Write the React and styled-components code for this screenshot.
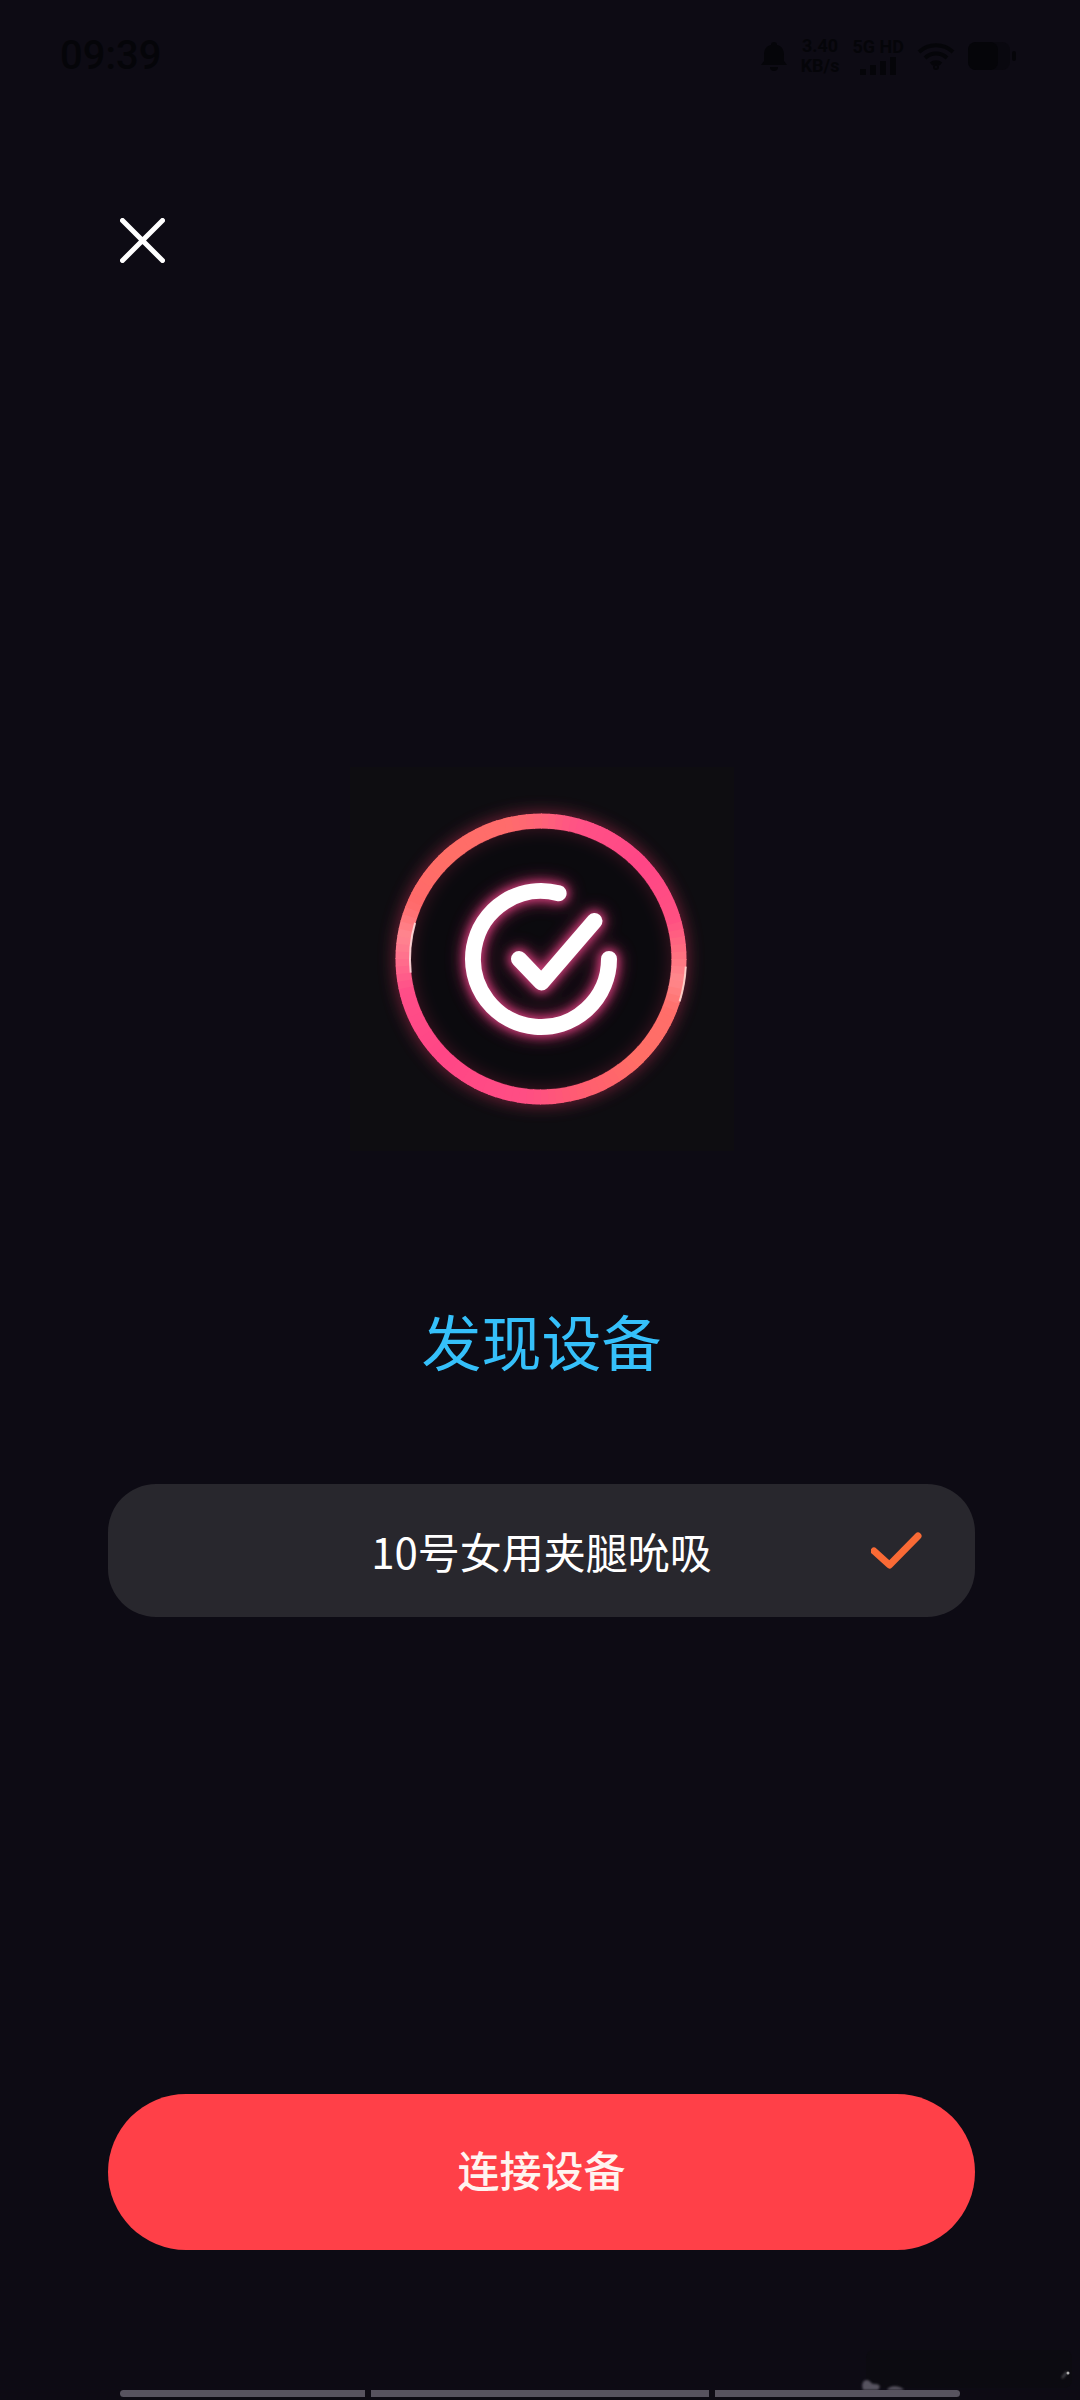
import styled, { createGlobalStyle } from "styled-components";

const GlobalStyle = createGlobalStyle`
  :root {
    --cl-bg: #0d0b14;
    --cl-status: #050509;
    --cl-picture: #0e0d11;
    --cl-card: #28272d;
    --cl-title: #35c0fa;
    --cl-accent: #ff4048;
    --cl-check: #f96a35;
    --cl-nav: #57535f;
  }

  * {
    box-sizing: border-box;
  }

  body {
    margin: 0;
    background: var(--cl-bg);
    font-family: "Noto Sans CJK SC", "Noto Sans", sans-serif;
  }
`;

const Page = styled.div`
  display: flex;
  flex-direction: column;
  width: 100%;
  min-height: 100vh;
  overflow: hidden;
  background: var(--cl-bg);
`;

const StatusBar = styled.header`
  display: flex;
  align-items: center;
  justify-content: space-between;
  height: 116px;
  padding: 0 64px 4px 60px;
  color: var(--cl-status);
`;

const Clock = styled.time`
  font-family: Roboto, sans-serif;
  font-size: 40px;
  font-weight: 500;
  line-height: 40px;
`;

const StatusIcons = styled.div`
  display: flex;
  align-items: center;
  gap: 13px;
`;

const StatusStack = styled.div`
  display: flex;
  flex-direction: column;
  align-items: center;
  font-family: Roboto, sans-serif;
  font-size: 18px;
  font-weight: 700;
  line-height: 20px;
`;

const TopBar = styled.div`
  display: flex;
  padding: 90px 108px 0;
`;

const CloseButton = styled.button`
  display: flex;
  padding: 12px;
  border: none;
  background: none;
  color: #ffffff;
  cursor: pointer;
`;

const Content = styled.main`
  display: flex;
  flex: 1;
  flex-direction: column;
  align-items: center;
  padding: 492px 105px 140px 108px;
`;

const Picture = styled.div`
  display: flex;
  background: var(--cl-picture);
`;

const Title = styled.h1`
  margin: 145px 0 100px;
  color: var(--cl-title);
  font-size: 60px;
  font-weight: 400;
  line-height: 88px;
`;

const DeviceList = styled.ul`
  width: 100%;
  margin: 0;
  padding: 0;
  list-style: none;
`;

const DeviceButton = styled.button`
  display: grid;
  grid-template-columns: 52px 1fr 52px;
  align-items: center;
  width: 100%;
  height: 133px;
  padding: 0 52px;
  border: none;
  border-radius: 48px;
  background: var(--cl-card);
  color: #ffffff;
  font-family: inherit;
  font-size: 42px;
  line-height: 60px;
  cursor: pointer;

  span {
    grid-column: 2;
  }
`;

const ConnectButton = styled.button`
  width: 100%;
  height: 156px;
  margin-top: auto;
  padding: 0 0 6px;
  border: none;
  border-radius: 78px;
  background: var(--cl-accent);
  color: #fff4f0;
  font-family: inherit;
  font-size: 42px;
  font-weight: 500;
  line-height: 60px;
  cursor: pointer;
`;

const NavBar = styled.footer`
  position: relative;
  display: flex;
  gap: 6px;
  padding: 0 120px 3px;
`;

const NavSegment = styled.i`
  flex: ${({ $grow }) => $grow};
  height: 7px;
  background: var(--cl-nav);

  &:first-child {
    border-radius: 4px 0 0 4px;
  }

  &:nth-child(3) {
    border-radius: 0 4px 4px 0;
  }
`;

const Smudge = styled.svg`
  position: absolute;
  right: 0;
  bottom: 0;
  pointer-events: none;
`;

// angle clockwise from the top, then r g b
const RING_STOPS = [
  [0, 255, 98, 122],
  [14, 255, 82, 134],
  [45, 255, 70, 134],
  [72, 255, 80, 130],
  [86, 255, 112, 128],
  [97, 255, 136, 140],
  [110, 255, 110, 106],
  [135, 255, 110, 102],
  [160, 255, 94, 112],
  [185, 255, 78, 132],
  [225, 255, 70, 134],
  [255, 255, 78, 136],
  [268, 255, 110, 140],
  [278, 255, 134, 144],
  [292, 255, 106, 106],
  [315, 255, 110, 102],
  [345, 255, 108, 108],
  [360, 255, 98, 122],
];

const CX = 191;
const CY = 192;

function ringColor(angle) {
  const next = RING_STOPS.findIndex((stop) => stop[0] > angle);
  const a = RING_STOPS[next - 1];
  const b = RING_STOPS[next];
  const t = (angle - a[0]) / (b[0] - a[0]);
  const rgb = [1, 2, 3].map((i) => Math.round(a[i] + (b[i] - a[i]) * t));
  return `rgb(${rgb.join(",")})`;
}

function arc(radius, from, to) {
  const point = (deg) => {
    const rad = ((deg - 90) * Math.PI) / 180;
    return `${CX + radius * Math.cos(rad)} ${CY + radius * Math.sin(rad)}`;
  };
  const large = to - from > 180 ? 1 : 0;
  return `M${point(from)}A${radius} ${radius} 0 ${large} 1 ${point(to)}`;
}

const SEGMENTS = Array.from({ length: 120 }, (_, i) => i * 3);

function SuccessMark() {
  const mark = (
    <>
      <path d={arc(68, 90, 375)} />
      <path d="M169 192l22.500 23.500l53-61.500" />
    </>
  );
  return (
    <svg width="384" height="384" viewBox="0 0 384 384" fill="none" aria-hidden="true">
      <defs>
        <filter id="wide" x="-30%" y="-30%" width="160%" height="160%">
          <feGaussianBlur stdDeviation="8" />
        </filter>
        <filter id="tight" x="-30%" y="-30%" width="160%" height="160%">
          <feGaussianBlur stdDeviation="4" />
        </filter>
        <filter id="soft" x="-100%" y="-10%" width="300%" height="120%">
          <feGaussianBlur stdDeviation="0.6" />
        </filter>
      </defs>

      <circle cx={CX} cy={CY} r="138" stroke="#d0305c" strokeWidth="18" opacity="0.5" filter="url(#wide)" />
      <circle cx={CX} cy={CY} r="130" fill="#07070c" opacity="0.5" />
      {SEGMENTS.map((angle) => (
        <path
          key={angle}
          d={arc(138, angle, angle + 3.4)}
          stroke={ringColor(angle)}
          strokeWidth="15"
        />
      ))}
      <path d={arc(131, 264, 286)} stroke="#ffe6e4" strokeWidth="2" opacity="0.8" filter="url(#soft)" />
      <path d={arc(145, 93, 107)} stroke="#ffe0d8" strokeWidth="2" opacity="0.8" filter="url(#soft)" />

      <g strokeLinecap="round" strokeLinejoin="round">
        <g stroke="#c02c66" strokeWidth="24" opacity="0.6" filter="url(#wide)">
          {mark}
        </g>
        <g stroke="#e8488a" strokeWidth="20" opacity="0.75" filter="url(#tight)">
          {mark}
        </g>
        <g stroke="#ffffff" strokeWidth="16">
          {mark}
        </g>
      </g>
    </svg>
  );
}

function StatusArea() {
  return (
    <StatusBar>
      <Clock>09:39</Clock>
      <StatusIcons>
        <svg width="28" height="32" viewBox="0 0 28 32" fill="currentColor" aria-hidden="true">
          <path d="M14 2a3 3 0 0 1 3 3c5 1 7 5 7 10v6l3 4H1l3-4v-6C4 10 6 6 11 5a3 3 0 0 1 3-3zM10 27h8a4 4 0 0 1-8 0z" />
        </svg>
        <StatusStack>
          <span>3.40</span>
          <span>KB/s</span>
        </StatusStack>
        <StatusStack>
          <span>5G HD</span>
          <svg width="40" height="18" viewBox="0 0 40 18" fill="currentColor" aria-hidden="true">
            <path d="M2 12h6v6H2zM12 8h6v10h-6zM22 4h6v14h-6zM32 0h6v18h-6z" />
          </svg>
        </StatusStack>
        <svg width="38" height="28" viewBox="0 0 38 28" fill="none" stroke="currentColor" strokeWidth="4" aria-hidden="true">
          <path d="M2 10a25 25 0 0 1 34 0M8 16a16 16 0 0 1 22 0M14 22a8 8 0 0 1 10 0" />
          <circle cx="19" cy="25" r="1" />
        </svg>
        <svg width="48" height="28" viewBox="0 0 48 28" fill="currentColor" aria-hidden="true">
          <rect width="42" height="28" rx="8" opacity="0.5" />
          <rect width="30" height="28" rx="8" />
          <rect x="44" y="9" width="4" height="10" rx="2" />
        </svg>
      </StatusIcons>
    </StatusBar>
  );
}

function App() {
  return (
    <>
      <GlobalStyle />
      <Page>
        <StatusArea />
        <TopBar>
          <CloseButton type="button" aria-label="关闭">
            <svg width="45" height="45" viewBox="0 0 45 45" fill="none" aria-hidden="true">
              <path d="M2.500 2.500l40 40M42.500 2.500l-40 40" stroke="currentColor" strokeWidth="5" strokeLinecap="round" />
            </svg>
          </CloseButton>
        </TopBar>
        <Content>
          <Picture>
            <SuccessMark />
          </Picture>
          <Title>发现设备</Title>
          <DeviceList>
            <li>
              <DeviceButton type="button">
                <span>10号女用夹腿吮吸</span>
                <svg width="52" height="37" viewBox="0 0 52 37" fill="none" aria-hidden="true">
                  <path d="M3 19l15.500 14L47 4" stroke="var(--cl-check)" strokeWidth="7" strokeLinecap="round" strokeLinejoin="round" />
                </svg>
              </DeviceButton>
            </li>
          </DeviceList>
          <ConnectButton type="button">连接设备</ConnectButton>
        </Content>
        <NavBar>
          <NavSegment $grow={245} />
          <NavSegment $grow={338} />
          <NavSegment $grow={245} />
          {/* faint mark in the corner, half covered by the bar */}
          <Smudge width="230" height="52" viewBox="0 0 230 52" aria-hidden="true">
            <defs>
              <filter id="haze">
                <feGaussianBlur stdDeviation="1" />
              </filter>
            </defs>
            <rect x="16" y="2" width="206" height="38" rx="8" fill="#0b0b0e" opacity="0.5" />
            <g filter="url(#haze)">
              <path d="M13 42c-2-6 0-10 4-10 3 0 4 4 7 4s5 0 6 3l-2 3zM37 42c2-5 13-5 17 0z" fill="#57535f" />
              <path d="M212 30l5-6" stroke="#4a4a4e" strokeWidth="2" />
            </g>
            <circle cx="218" cy="25" r="1.500" fill="#b0b0b0" />
          </Smudge>
        </NavBar>
      </Page>
    </>
  );
}

export default App;
